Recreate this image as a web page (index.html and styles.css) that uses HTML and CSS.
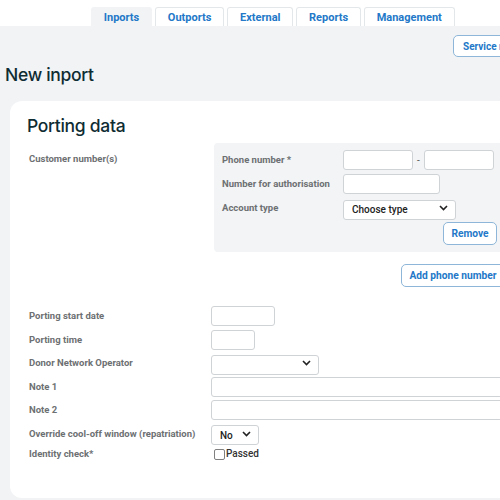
FILE: index.html
```html
<!DOCTYPE html>
<html lang="en">
<head>
  <meta charset="UTF-8">
  <title>New inport</title>
  <link rel="stylesheet" href="styles.css">
</head>
<body>

  <div class="topbar">
    <a class="tab active">Inports</a>
    <a class="tab">Outports</a>
    <a class="tab">External</a>
    <a class="tab">Reports</a>
    <a class="tab">Management</a>
  </div>

  <div class="toolbar">
    <button class="btn">Service menu</button>
  </div>

  <h1>New inport</h1>

  <div class="card">
    <h2>Porting data</h2>

    <div class="form">
      <label class="row-label top">Customer number(s)</label>
      <div class="numbers">
        <div class="number-box">
          <label>Phone number *</label>
          <div class="phone">
            <input type="text" class="w70">
            <span class="dash">-</span>
            <input type="text" class="w70">
          </div>

          <label>Number for authorisation</label>
          <div><input type="text" class="w97"></div>

          <label>Account type</label>
          <div class="select w113">
            <select><option>Choose type</option></select>
            <svg class="chev" width="9" height="6" viewBox="0 0 9 6"><path d="M1 1l3.5 3.5L8 1" fill="none" stroke="#222" stroke-width="1.6"/></svg>
          </div>

          <div class="remove-row">
            <button class="btn tall">Remove</button>
          </div>
        </div>

        <div class="add-row">
          <button class="btn tall">Add phone number</button>
        </div>
      </div>

      <label class="row-label">Porting start date</label>
      <div><input type="text" class="w64"></div>

      <label class="row-label">Porting time</label>
      <div><input type="text" class="w44"></div>

      <label class="row-label">Donor Network Operator</label>
      <div class="select w108">
        <select><option></option></select>
        <svg class="chev" width="9" height="6" viewBox="0 0 9 6"><path d="M1 1l3.5 3.5L8 1" fill="none" stroke="#222" stroke-width="1.6"/></svg>
      </div>

      <label class="row-label">Note 1</label>
      <div><input type="text" class="wide"></div>

      <label class="row-label">Note 2</label>
      <div><input type="text" class="wide"></div>

      <label class="row-label">Override cool-off window (repatriation)</label>
      <div class="select w48">
        <select><option>No</option></select>
        <svg class="chev" width="9" height="6" viewBox="0 0 9 6"><path d="M1 1l3.5 3.5L8 1" fill="none" stroke="#222" stroke-width="1.6"/></svg>
      </div>

      <label class="row-label">Identity check*</label>
      <label class="check"><span class="box"></span>Passed</label>
    </div>
  </div>

</body>
</html>
```

FILE: styles.css
```css
html, body {
  overflow: hidden;
}

body {
  margin: 0;
  width: 500px;
  height: 500px;
  background-color: #f1f3f5;
  font-family: 'Roboto', sans-serif;
  color: #333;
}

.topbar {
  background-color: #fff;
  height: 26px;
  padding-left: 91px;
  display: flex;
  align-items: flex-end;
  gap: 3px;
}

.tab {
  height: 19px;
  line-height: 19px;
  padding: 0 11.8px;
  border: 1px solid #e4e7ea;
  border-bottom: none;
  border-radius: 3px 3px 0 0;
  background-color: #fff;
  color: #2378c8;
  font-weight: 700;
  font-size: 11px;
  box-sizing: border-box;
}

.tab.active {
  background-color: #f1f3f5;
  border-color: #f1f3f5;
}

.toolbar {
  display: flex;
  padding: 9px 0 0 453px;
}

.btn {
  background-color: #fff;
  border: 1px solid #8db6d8;
  border-radius: 5px;
  color: #2378c8;
  font-family: 'Roboto', sans-serif;
  font-weight: 700;
  font-size: 10px;
  height: 22px;
  padding: 0 9px;
  white-space: nowrap;
  flex-shrink: 0;
  cursor: pointer;
}

.btn.tall {
  height: 23px;
  padding: 0 7.5px;
  font-size: 10.2px;
}

h1 {
  margin: 0;
  padding: 6px 0 0 5px;
  font-family: 'Inter', sans-serif;
  font-size: 17.5px;
  font-weight: 500;
  letter-spacing: -0.3px;
  line-height: 24px;
  color: #0f2c33;
}

.card {
  margin: 14px 0 0 10px;
  width: 560px;
  min-height: 397px;
  box-sizing: border-box;
  background-color: #fff;
  border-radius: 12px;
  padding: 14px 17px;
}

h2 {
  margin: 0 0 6px 0;
  font-family: 'Inter', sans-serif;
  font-size: 17.5px;
  font-weight: 500;
  letter-spacing: -0.3px;
  line-height: 22px;
  color: #0f2c33;
}

.form {
  display: grid;
  grid-template-columns: 182px 1fr;
  row-gap: 3.5px;
  align-items: center;
  padding-left: 2px;
}

.row-label,
.number-box label {
  font-size: 9.5px;
  font-weight: 700;
  color: #6d7072;
  line-height: 14px;
  white-space: nowrap;
}

.row-label.top {
  align-self: start;
  padding-top: 9px;
}

.numbers {
  width: 291px;
  margin-left: 3px;
  margin-bottom: 15.5px;
}

.number-box {
  background-color: #f2f4f6;
  border-radius: 4px;
  padding: 7px 8px;
  display: grid;
  grid-template-columns: 121px 1fr;
  row-gap: 4px;
  align-items: center;
}

.phone {
  display: flex;
  align-items: center;
  gap: 4px;
}

.dash {
  font-size: 10px;
  color: #555;
}

input {
  display: block;
  height: 20px;
  border: 1px solid #cfd3d6;
  border-radius: 3px;
  background-color: #fff;
  box-sizing: border-box;
  padding: 0 6px;
  font-size: 10px;
}

.w70 { width: 70px; }
.w97 { width: 97px; }
.w64 { width: 64px; }
.w44 { width: 44px; }
.wide { width: 310px; }

.select {
  position: relative;
  height: 20px;
}

.select select {
  appearance: none;
  -webkit-appearance: none;
  width: 100%;
  height: 20px;
  border: 1px solid #cfd3d6;
  border-radius: 3px;
  background-color: #fff;
  padding: 0 0 0 8px;
  font-family: 'Roboto', sans-serif;
  font-size: 10px;
  font-weight: 500;
  color: #222;
}

.select .chev {
  position: absolute;
  right: 8px;
  top: 7px;
  pointer-events: none;
}

.w113 { width: 113px; }
.w108 { width: 108px; }
.w48 { width: 48px; }

.remove-row {
  grid-column: 1 / 3;
  display: flex;
  justify-content: flex-end;
}

.add-row {
  display: flex;
  justify-content: flex-end;
  margin-top: 12px;
}

.check {
  display: flex;
  align-items: center;
  gap: 1px;
  padding-left: 3px;
  font-size: 10px;
  font-weight: 500;
  color: #333;
  line-height: 14px;
}

.check .box {
  width: 9px;
  height: 9px;
  border: 1px solid #808080;
  border-radius: 2px;
  background-color: #fff;
}
```
